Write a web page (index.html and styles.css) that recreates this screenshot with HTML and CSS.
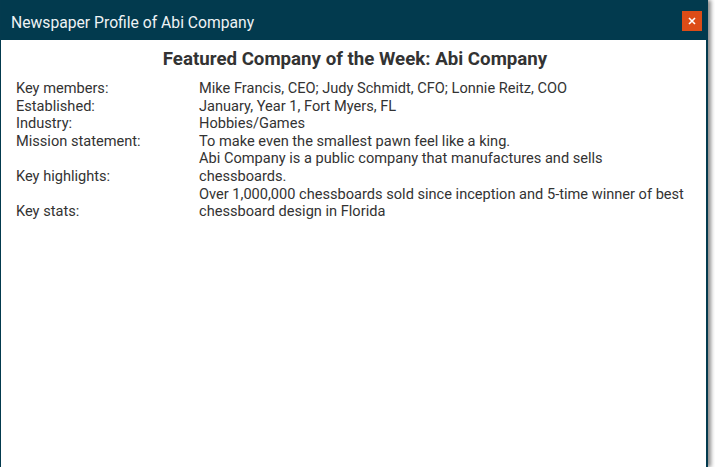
FILE: index.html
```html
<!DOCTYPE html>
<html>
<head>
<meta charset="utf-8">
<link rel="stylesheet" href="styles.css">
</head>
<body>
<div class="window">
  <div class="titlebar">
    <span class="title">Newspaper Profile of Abi Company</span>
    <button class="close" aria-label="Close">
      <svg width="8" height="8" viewBox="0 0 8 8"><path d="M1 1L7 7M7 1L1 7" stroke="#fff" stroke-width="1.6"/></svg>
    </button>
  </div>
  <div class="content">
    <h1 class="heading">Featured Company of the Week: Abi Company</h1>
    <table class="profile">
      <tr><td class="label">Key members:</td><td class="value">Mike Francis, CEO; Judy Schmidt, CFO; Lonnie Reitz, COO</td></tr>
      <tr><td class="label">Established:</td><td class="value">January, Year 1, Fort Myers, FL</td></tr>
      <tr><td class="label">Industry:</td><td class="value">Hobbies/Games</td></tr>
      <tr><td class="label">Mission statement:</td><td class="value">To make even the smallest pawn feel like a king.</td></tr>
      <tr><td class="label">Key highlights:</td><td class="value">Abi Company is a public company that manufactures and sells chessboards.</td></tr>
      <tr><td class="label">Key stats:</td><td class="value">Over 1,000,000 chessboards sold since inception and 5-time winner of best chessboard design in Florida</td></tr>
    </table>
  </div>
</div>
</body>
</html>
```
FILE: styles.css
```css
html, body {
  margin: 0;
  padding: 0;
  background: #ffffff;
  height: 100%;
  overflow: hidden;
}
body {
  font-family: Roboto, "Liberation Sans", sans-serif;
}
.window {
  width: 705px;
  height: 467px;
  border-left: 1px solid #033a4e;
  border-right: 2px solid #033a4e;
  box-shadow: 3px 0 4px rgba(0, 0, 0, 0.45);
  background: #fff;
  display: flex;
  flex-direction: column;
}
.titlebar {
  height: 40px;
  background: #023a4e;
  display: flex;
  align-items: center;
  justify-content: space-between;
  padding: 0 4px 0 10px;
  box-sizing: border-box;
  flex: none;
}
.title {
  color: #eef3f5;
  font-size: 15.7px;
  margin-top: 5px;
}
.close {
  width: 20px;
  height: 20px;
  border: none;
  padding: 0;
  background: #dd4c17;
  display: flex;
  align-items: center;
  justify-content: center;
  margin-top: 1px;
}
.content {
  padding: 8px 16px 0 15px;
  color: #333;
}
.heading {
  font-size: 18.7px;
  font-weight: 700;
  text-align: center;
  margin: 0 0 10px;
  padding-left: 4px;
  color: #333;
}
.profile {
  border-collapse: collapse;
  font-size: 14.6px;
  line-height: 17.6px;
  width: 100%;
}
.profile td {
  padding: 0;
  vertical-align: bottom;
}
.label {
  width: 183px;
}
```
